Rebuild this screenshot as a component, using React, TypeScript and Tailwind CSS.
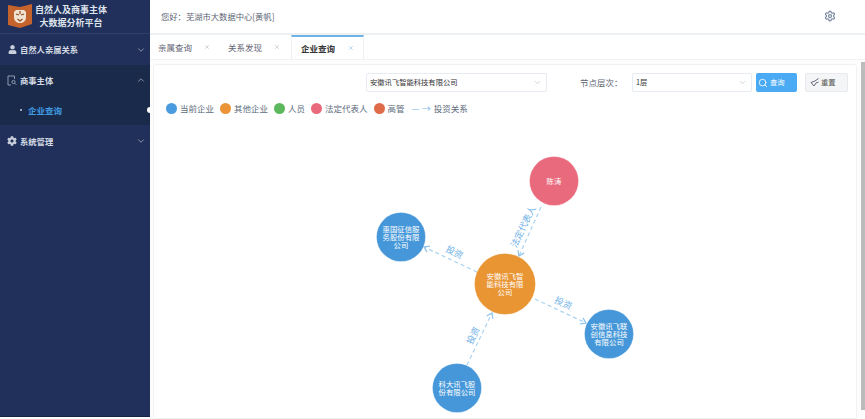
import { ChevronDown, ChevronUp, Search, Settings, X } from "lucide-react";
import { FaCog, FaUser } from "react-icons/fa";
import type { ReactNode } from "react";

const font = "font-['Noto_Sans_CJK_SC','Liberation_Sans',sans-serif]";

function NavRow({ icon, label, open, h }: { icon: ReactNode; label: string; open?: boolean; h: string }) {
  return (
    <div className={`${h} flex items-center pl-[7px] pr-[4px]`}>
      <span className="w-[10px] flex justify-center">{icon}</span>
      <span className="ml-[3px] text-[8.3px] font-bold text-[#d3d9e3] flex-1">{label}</span>
      {open ? <ChevronUp size={10} className="text-[#9aa6bb]" /> : <ChevronDown size={10} className="text-[#9aa6bb]" />}
    </div>
  );
}

function Tab({ label, active }: { label: string; active?: boolean }) {
  return (
    <div className={`h-[24px] flex items-center ${active ? "ml-[1px] w-[73px] pl-[9px] bg-white border-t-2 border-t-[#6db3e6] border-x border-x-[#eef1f4]" : "w-[70px] pl-[8px]"}`}>
      <span className={`text-[8.5px] ${active ? "text-[#333] font-bold w-[47px]" : "text-[#667] w-[46px]"}`}>{label}</span>
      <X size={6} className={active ? "text-[#6db3e6]" : "text-[#aab]"} />
    </div>
  );
}

function Legend({ color, label }: { color: string; label: string }) {
  return (
    <div className="flex items-center gap-[3px]">
      <span className={`w-[11px] h-[11px] rounded-full ${color}`} />
      <span className="text-[8.5px] text-[#5d6b7c]">{label}</span>
    </div>
  );
}

function Node({ x, y, r, color, lines }: { x: number; y: number; r: number; color: string; lines: string[] }) {
  return (
    <g>
      <circle cx={x} cy={y} r={r} fill={color} stroke="#ffffff" strokeOpacity={0.25} strokeWidth={1} />
      {lines.map((l, i) => (
        <text key={i} x={x} y={y + (i - (lines.length - 1) / 2) * 8 + 2.5} textAnchor="middle" fontSize={7.4} fill="#fff">{l}</text>
      ))}
    </g>
  );
}

function Edge({ x1, y1, x2, y2, label, lx, ly, rot }: { x1: number; y1: number; x2: number; y2: number; label: string; lx: number; ly: number; rot: number }) {
  const a = Math.atan2(y2 - y1, x2 - x1);
  const s = 6;
  const p1 = [x2 - s * Math.cos(a - 0.6), y2 - s * Math.sin(a - 0.6)];
  const p2 = [x2 - s * Math.cos(a + 0.6), y2 - s * Math.sin(a + 0.6)];
  return (
    <g>
      <line x1={x1} y1={y1} x2={x2} y2={y2} stroke="#a9d3f2" strokeWidth={1.2} strokeDasharray="4 3" />
      <polyline points={`${p1[0]},${p1[1]} ${x2},${y2} ${p2[0]},${p2[1]}`} fill="none" stroke="#8cc3ee" strokeWidth={1.2} />
      <text x={lx} y={ly} fontSize={9} fill="#6eb0e6" textAnchor="middle" transform={`rotate(${rot} ${lx} ${ly})`}>{label}</text>
    </g>
  );
}

export default function App() {
  return (
    <div className={`relative w-[865px] h-[419px] overflow-hidden flex bg-white ${font}`}>
      <aside className="w-[150px] h-[417px] bg-[#20305a] flex flex-col shrink-0 border-b border-[#17244a]">
        <div className="h-[34px] shrink-0 flex items-center pl-[8px] border-b border-[#2e3f68]">
          <svg width="24" height="25" viewBox="0 0 24 25" className="shrink-0">
            <path d="M0 1 L12 3 L24 0 V20 L12 24 L0 21 Z" fill="#c4642c" />
            <path d="M6 8 L8 6 L16 6 L18 8 L18 13 C18 17 15 19 12 19 C9 19 6 17 6 13 Z" fill="#f1e3d2" />
            <path d="M8 10 L11 11 M16 10 L13 11 M12 7 V10 M9.5 15 L12 17 L14.5 15" stroke="#8a4a24" strokeWidth="1.2" fill="none" />
          </svg>
          <div className="ml-[3px] w-[72px] text-[9px] leading-[12.5px] font-bold text-[#dfe4ec] text-center whitespace-nowrap">自然人及商事主体<br />大数据分析平台</div>
        </div>
        <NavRow h="h-[31px]" icon={<FaUser size={9} className="text-[#c9d0dc]" />} label="自然人亲属关系" />
        <div className="bg-[#1a2a4a] h-[60px] shrink-0">
          <NavRow h="h-[30px]" icon={
            <svg width="10" height="11" viewBox="0 0 10 11" fill="none" stroke="#9aa6bb" strokeWidth="0.9">
              <path d="M7.5 4 V1 H1 V10 H4" />
              <circle cx="6.5" cy="7" r="1.6" />
              <path d="M7.7 8.2 L9.3 9.8" />
            </svg>
          } label="商事主体" open />
          <div className="relative h-[30px] flex items-center pl-[20px]">
            <span className="w-[2px] h-[2px] rounded-full bg-[#c9d0dc]" />
            <span className="ml-[6px] text-[8.5px] font-bold text-[#3f9ae0]">企业查询</span>
            <span className="absolute right-0 top-[12px] w-[3px] h-[6px] bg-white rounded-l-full" />
          </div>
        </div>
        <NavRow h="h-[32px]" icon={<FaCog size={10} className="text-[#c9d0dc]" />} label="系统管理" />
      </aside>
      <main className="flex-1 flex flex-col min-w-0 bg-[#fdfdfe]">
        <header className="h-[35px] shrink-0 flex items-center justify-between pl-[11px] pr-[29px] bg-white border-b-2 border-[#eef1f4]">
          <span className="text-[8.3px] text-[#5d6674]">您好：芜湖市大数据中心[黄帆]</span>
          <Settings size={12} strokeWidth={2.5} className="text-[#7c8ba3] -mt-[2px]" />
        </header>
        <nav className="h-[25px] shrink-0 flex items-end bg-white border-b border-[#f0f2f5]">
          <Tab label="亲属查询" />
          <Tab label="关系发现" />
          <Tab label="企业查询" active />
        </nav>
        <div className="flex-1 flex min-h-0">
          <section className="flex-1 mt-[4px] ml-[3px] bg-white rounded-t-[3px] border border-[#f0f2f5] flex flex-col min-w-0">
            <div className="h-[35px] shrink-0 flex items-center">
              <div className="ml-[212px] w-[181px] h-[19px] border border-[#e6ecf2] rounded-[2px] flex items-center justify-between pl-[3px] pr-[4px]">
                <span className="text-[7.3px] text-[#333]">安徽讯飞智能科技有限公司</span>
                <ChevronDown size={9} className="text-[#c0c7d0]" />
              </div>
              <span className="ml-[33px] w-[52px] text-[8.5px] text-[#5d6674]">节点层次：</span>
              <div className="w-[120px] h-[19px] border border-[#e6ecf2] rounded-[2px] flex items-center justify-between pl-[3px] pr-[4px]">
                <span className="text-[7.3px] text-[#333]">1层</span>
                <ChevronDown size={9} className="text-[#c0c7d0]" />
              </div>
              <button className="ml-[4px] w-[41px] h-[19px] bg-[#4aaaf3] rounded-[2px] flex items-center pl-[2px] gap-[2px]">
                <Search size={10} className="text-white" />
                <span className="text-[7.3px] text-white">查询</span>
              </button>
              <button className="ml-[8px] w-[43px] h-[19px] bg-[#f4f5f7] border border-[#e8eaed] rounded-[2px] flex items-center pl-[4px] gap-[2px]">
                <svg width="9" height="9" viewBox="0 0 9 9"><path d="M8.5 0.5 L5 3 L1 4.5 L4 8 L6 5 L8.5 4" fill="none" stroke="#667" /></svg>
                <span className="text-[7.3px] text-[#555]">重置</span>
              </button>
            </div>
            <div className="h-[17px] shrink-0 flex items-center gap-[6px] pl-[12px]">
              <Legend color="bg-[#4a9be0]" label="当前企业" />
              <Legend color="bg-[#ea9437]" label="其他企业" />
              <Legend color="bg-[#5cb85c]" label="人员" />
              <Legend color="bg-[#e96a7c]" label="法定代表人" />
              <Legend color="bg-[#de6b4a]" label="高管" />
              <div className="flex items-center gap-[3px] ml-[1px]">
                <span className="text-[9px] text-[#7fbbe9] leading-none whitespace-nowrap">— →</span>
                <span className="text-[8.5px] text-[#5d6b7c]">投资关系</span>
              </div>
            </div>
            <div className="relative flex-1 min-h-0" />
          </section>
          <div className="w-[8px] shrink-0 relative">
            <div className="absolute right-0 top-[2px] bottom-[9px] w-[4px] bg-[#bcbcbc]" />
          </div>
        </div>
      </main>
      <svg className={`absolute left-0 top-0 pointer-events-none ${font}`} width="865" height="419" viewBox="0 0 865 419">
        <Edge x1={541} y1={207} x2={519} y2={256} label="法定代表人" lx={526} ly={228} rot={-64} />
        <Edge x1={477} y1={272} x2={424} y2={247} label="投资" lx={453} ly={255} rot={27} />
        <Edge x1={535} y1={299} x2={586} y2={323} label="投资" lx={562} ly={306} rot={25} />
        <Edge x1={467} y1={365} x2={492} y2={313} label="投资" lx={476} ly={337} rot={-64} />
        <Node x={554} y={181} r={24.5} color="#e96a7c" lines={["陈涛"]} />
        <Node x={505} y={284} r={30.5} color="#e99534" lines={["安徽讯飞智", "能科技有限", "公司"]} />
        <Node x={401} y={237} r={24.5} color="#4597d9" lines={["惠国征信服", "务股份有限", "公司"]} />
        <Node x={609} y={334} r={24.5} color="#4597d9" lines={["安徽讯飞联", "创信息科技", "有限公司"]} />
        <Node x={457} y={388} r={24.5} color="#4597d9" lines={["科大讯飞股", "份有限公司"]} />
      </svg>
    </div>
  );
}
